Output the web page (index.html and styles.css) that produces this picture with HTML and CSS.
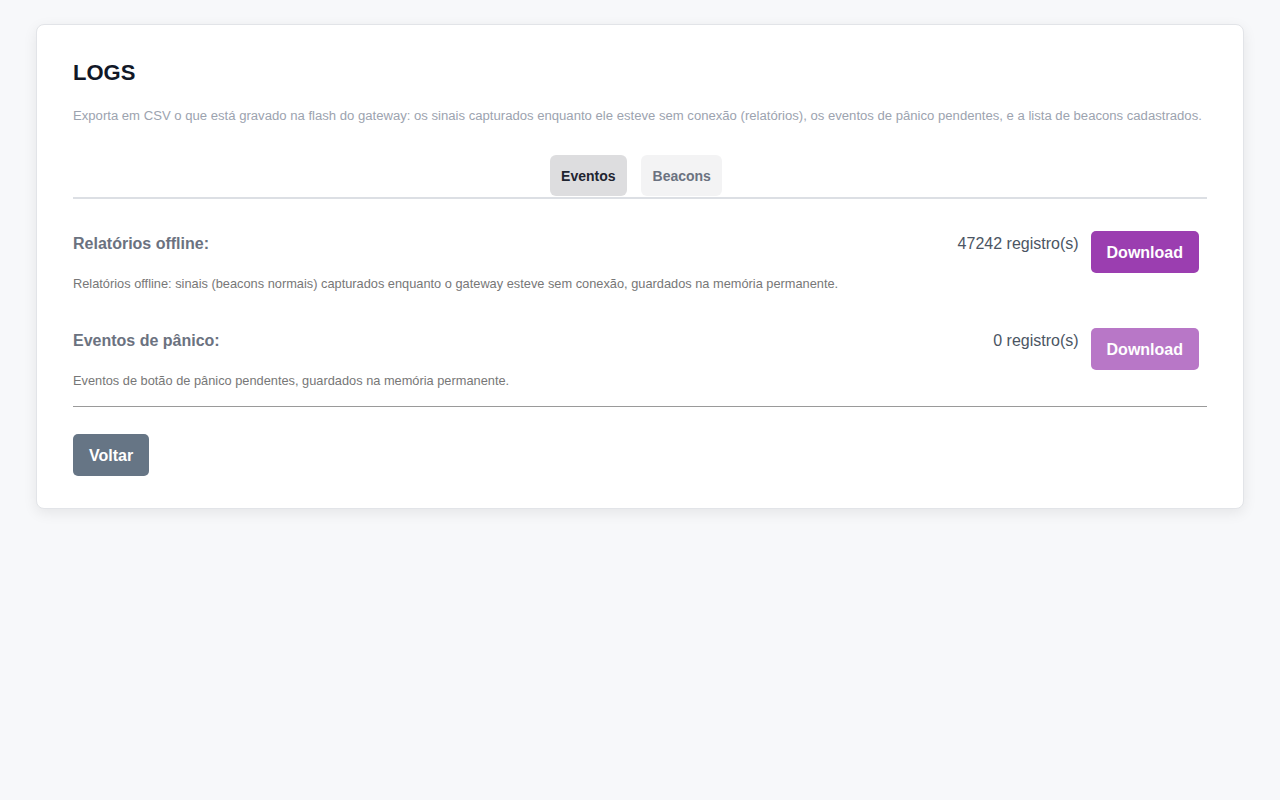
FILE: index.html
```html
<!DOCTYPE html>
<html lang="pt-BR">
<head>
  <meta charset="UTF-8" />
  <meta name="viewport" content="width=device-width, initial-scale=1.0"/>
  <title>Logs</title>
  <link rel="stylesheet" href="styles.css">
</head>
<body>
  <div class="card">
    <h2>LOGS</h2>
    <p class="intro">Exporta em CSV o que está gravado na flash do gateway: os sinais capturados enquanto ele esteve sem conexão (relatórios), os eventos de pânico pendentes, e a lista de beacons cadastrados.</p>

    <!-- Abas -->
    <div class="tabs">
      <button class="tab active">Eventos</button>
      <button class="tab">Beacons</button>
    </div>

    <div class="section">
      <div class="row">
        <span class="label">Relatórios offline:</span>
        <div class="actions">
          <span class="count">47242 registro(s)</span>
          <button class="btn-download">Download</button>
        </div>
      </div>
      <p class="desc">Relatórios offline: sinais (beacons normais) capturados enquanto o gateway esteve sem conexão, guardados na memória permanente.</p>
    </div>

    <div class="section">
      <div class="row">
        <span class="label">Eventos de pânico:</span>
        <div class="actions">
          <span class="count">0 registro(s)</span>
          <button class="btn-download" disabled>Download</button>
        </div>
      </div>
      <p class="desc">Eventos de botão de pânico pendentes, guardados na memória permanente.</p>
    </div>

    <hr class="divider">

    <button class="btn-back">Voltar</button>
  </div>
</body>
</html>
```

FILE: styles.css
```css
body {
  margin: 0;
  padding: 24px 36px;
  background: #f7f8fa;
  font-family: "Liberation Sans", Arial, sans-serif;
  color: #111827;
}
.card {
  background: white;
  border: 1px solid #e2e4e8;
  border-radius: 8px;
  box-shadow: 0 4px 14px rgba(0,0,0,0.08);
  padding: 35px 36px 32px;
}
h2 {
  margin: 0;
  font-size: 22px;
  line-height: 26px;
  color: #111827;
}
.intro {
  margin: 22px 0 0;
  font-size: 13.12px;
  line-height: 16px;
  color: #9ca3af;
}

/* Abas */
.tabs {
  display: flex;
  justify-content: center;
  gap: 6px;
  margin-top: 31px;
  padding-bottom: 1px;
  border-bottom: 2px solid #dcdfe4;
}
.tab {
  height: 41px;
  margin-right: 8px;
  padding: 0 11.5px;
  border: none;
  border-radius: 6px;
  background: #f3f3f4;
  color: #6b7280;
  font-family: inherit;
  font-size: 14px;
  font-weight: bold;
  cursor: pointer;
}
.tab.active {
  background: #dddddf;
  color: #1f2430;
}

.section {
  margin-top: 32px;
}
.section + .section {
  margin-top: 36px;
}
.row {
  display: flex;
  justify-content: space-between;
  align-items: flex-start;
}
.label {
  padding-top: 1px;
  font-size: 16px;
  line-height: 24px;
  font-weight: bold;
  color: #6b7280;
}
.actions {
  display: flex;
  align-items: flex-start;
  gap: 12px;
  margin-right: 8px;
}
.count {
  padding-top: 1px;
  font-size: 16px;
  line-height: 24px;
  color: #4b5563;
}
.btn-download,
.btn-back {
  padding: 13px 16px 11px;
  border: none;
  border-radius: 5px;
  color: white;
  font-family: inherit;
  font-size: 16px;
  line-height: 18px;
  font-weight: bold;
  cursor: pointer;
}
.btn-download {
  background: #9b3eb0;
}
.btn-download:disabled {
  opacity: 0.7;
  cursor: default;
}
.desc {
  margin: 3px 0 0;
  font-size: 12.8px;
  line-height: 16px;
  color: #777;
}
.divider {
  margin: 17px 0 0;
  border: none;
  border-top: 1px solid #9a9a9a;
}
.btn-back {
  margin-top: 27px;
  background: #667585;
}
```
